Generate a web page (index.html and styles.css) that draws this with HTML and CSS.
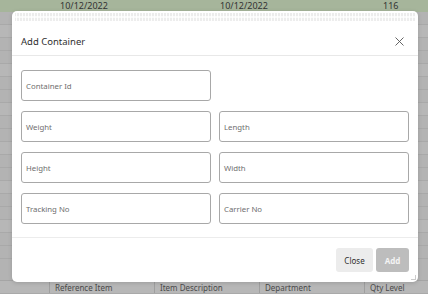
FILE: index.html
```html
<!DOCTYPE html>
<html>
<head>
<meta charset="utf-8">
<link rel="stylesheet" href="styles.css">
</head>
<body>
<div class="page">
  <div class="table">
    <div class="row row-green">
      <span class="c1">10/12/2022</span><span class="c2">10/12/2022</span><span class="c3">116</span>
    </div>
    <div class="row"></div>
    <div class="row"></div>
    <div class="row"></div>
    <div class="row"></div>
    <div class="row"></div>
    <div class="row"></div>
    <div class="row"></div>
    <div class="row"></div>
    <div class="row"></div>
    <div class="row"></div>
    <div class="row"></div>
    <div class="row"></div>
    <div class="row"></div>
    <div class="row"></div>
    <div class="row"></div>
    <div class="row"></div>
    <div class="row"></div>
    <div class="row"></div>
    <div class="row"></div>
    <div class="row row-head">
      <span class="h h1">Reference Item</span><span class="h h2">Item Description</span><span class="h h3">Department</span><span class="h h4">Qty Level</span>
    </div>
  </div>

  <div class="modal">
    <div class="ghost"></div>
    <div class="modal-header">
      <span class="title">Add Container</span>
      <svg class="close-x" width="9" height="9" viewBox="0 0 9 9"><path d="M0.5 0.5 L8.5 8.5 M8.5 0.5 L0.5 8.5" stroke="#555" stroke-width="0.9" fill="none"/></svg>
    </div>
    <div class="modal-body">
      <div class="grid">
        <div class="field"><span>Container Id</span></div>
        <div class="spacer"></div>
        <div class="field"><span>Weight</span></div>
        <div class="field"><span>Length</span></div>
        <div class="field"><span>Height</span></div>
        <div class="field"><span>Width</span></div>
        <div class="field"><span>Tracking No</span></div>
        <div class="field"><span>Carrier No</span></div>
      </div>
    </div>
    <div class="modal-footer">
      <button class="btn btn-close">Close</button>
      <button class="btn btn-add">Add</button>
    </div>
    <span class="grip"></span>
  </div>
</div>
</body>
</html>
```

FILE: styles.css
```css
html, body {
  margin: 0;
  padding: 0;
}
body {
  width: 428px;
  height: 294px;
  overflow: hidden;
  font-family: "Noto Sans", "Open Sans", sans-serif;
}
.page {
  position: relative;
  width: 428px;
  height: 294px;
  background: #b3b3b3;
  overflow: hidden;
}
.table {
  display: flex;
  flex-direction: column;
  height: 294px;
}
.row {
  height: 13px;
  border-bottom: 1px solid #a9a9a9;
  box-sizing: border-box;
  display: flex;
  align-items: center;
  font-size: 9px;
  color: #3a3a3a;
}
.row:nth-child(3n) {
  background: #b7b7b7;
}
.row-green {
  height: 12px;
  background: #a6b59b;
  border-bottom: none;
  line-height: 12px;
  color: #333;
}
.row-green .c1 { margin-left: 60px; width: 160px; }
.row-green .c2 { width: 163px; }
.row-head {
  margin-top: auto;
  height: 14px;
  background: #b4b4b4;
  border-top: 1px solid #a5a5a5;
  color: #4a4a4a;
  font-size: 8px;
}
.h {
  height: 100%;
  display: flex;
  align-items: center;
  border-left: 1px solid #9f9f9f;
  padding-left: 5px;
  box-sizing: border-box;
}
.h1 { margin-left: 49px; width: 105px; }
.h2 { width: 105px; }
.h3 { width: 105px; }
.h4 { flex: 1; }

.modal {
  position: absolute;
  left: 12px;
  top: 11px;
  width: 406px;
  height: 271px;
  background: #fff;
  border-radius: 5px;
  box-shadow: 0 1px 4px rgba(0,0,0,0.15);
  display: flex;
  flex-direction: column;
  overflow: hidden;
}
.ghost {
  position: absolute;
  left: 3px;
  top: 2px;
  right: 3px;
  height: 9px;
  background:
    repeating-linear-gradient(90deg, rgba(255,255,255,0) 0 1px, rgba(255,255,255,0.9) 1px 2px, rgba(255,255,255,0) 2px 3px),
    linear-gradient(180deg, #ececec 0 3px, #fafafa 3px 5px, #ededed 5px 8px, #fff 8px);
}
.modal-header {
  height: 45px;
  box-sizing: border-box;
  padding: 16px 14px 0 9px;
  display: flex;
  align-items: center;
  justify-content: space-between;
  border-bottom: 1px solid #e8e8e8;
}
.title {
  font-size: 9.5px;
  color: #2f2f2f;
}
.close-x {
  display: block;
}
.modal-body {
  padding: 14px 9px 0 9px;
  height: 182px;
  box-sizing: border-box;
  border-bottom: 1px solid #ececec;
}
.grid {
  display: grid;
  grid-template-columns: 190px 190px;
  column-gap: 8px;
  row-gap: 10px;
}
.field {
  height: 31px;
  border: 1px solid #a8a8a8;
  border-radius: 3px;
  box-sizing: border-box;
  display: flex;
  align-items: center;
  padding-left: 4px;
  font-size: 7.8px;
  color: #6e6e6e;
}
.modal-footer {
  flex: 1;
  display: flex;
  justify-content: flex-end;
  align-items: flex-start;
  padding: 10px 9px 0 0;
  gap: 3px;
}
.btn {
  border: none;
  border-radius: 3px;
  height: 24px;
  font-family: "Noto Sans", "Open Sans", sans-serif;
  font-size: 8px;
  padding: 0;
}
.btn-close {
  width: 37px;
  background: #ececec;
  color: #2f2f2f;
}
.btn-add {
  width: 33px;
  background: #bdbdbd;
  color: #f4f4f4;
  font-weight: bold;
}
.grip {
  position: absolute;
  right: 2px;
  bottom: 2px;
  width: 4px;
  height: 4px;
  border-right: 1px solid #ccc;
  border-bottom: 1px solid #ccc;
}
```
